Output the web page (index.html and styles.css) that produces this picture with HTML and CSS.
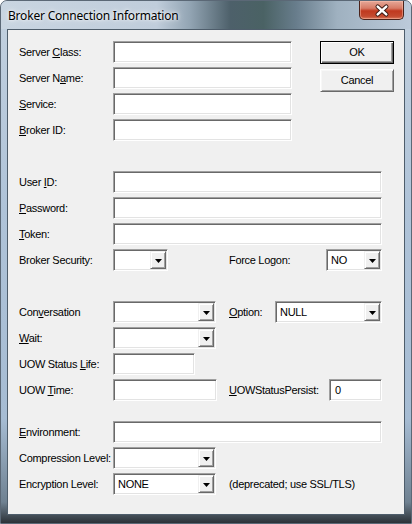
FILE: index.html
```html
<!DOCTYPE html>
<html>
<head>
<meta charset="utf-8">
<link rel="stylesheet" href="styles.css">
</head>
<body>
<div class="window">
  <div class="titlebar">
    <span class="title">Broker Connection Information</span>
    <div class="close">
      <svg width="45" height="19" viewBox="0 0 45 19">
        <path d="M18.5 5.5 L27.5 13.5 M27.5 5.5 L18.5 13.5" stroke="#3b1a14" stroke-width="4.6" stroke-linecap="round" fill="none"/>
        <path d="M18.5 5.5 L27.5 13.5 M27.5 5.5 L18.5 13.5" stroke="#ffffff" stroke-width="2.6" stroke-linecap="round" fill="none"/>
      </svg>
    </div>
  </div>
  <div class="client">
    <div class="top">
      <div class="form form-top">
        <span class="lbl">Server <u>C</u>lass:</span><div class="edit"></div>
        <span class="lbl">Server N<u>a</u>me:</span><div class="edit"></div>
        <span class="lbl"><u>S</u>ervice:</span><div class="edit"></div>
        <span class="lbl"><u>B</u>roker ID:</span><div class="edit"></div>
      </div>
      <div class="buttons">
        <div class="btn default">OK</div>
        <div class="btn">Cancel</div>
      </div>
    </div>

    <div class="form sec sec2">
      <span class="lbl">User <u>I</u>D:</span><div class="edit span2"></div>
      <span class="lbl"><u>P</u>assword:</span><div class="edit span2"></div>
      <span class="lbl"><u>T</u>oken:</span><div class="edit span2"></div>
      <span class="lbl">Broker Security:</span>
      <div class="combo w55"><span class="val"></span><span class="dd"><svg width="7" height="4" viewBox="0 0 7 4"><path d="M0 0 H7 L3.5 4 Z" fill="#000"/></svg></span></div>
      <div class="pair"><span class="lbl">Force Logon:</span>
        <div class="combo w56"><span class="val">NO</span><span class="dd"><svg width="7" height="4" viewBox="0 0 7 4"><path d="M0 0 H7 L3.5 4 Z" fill="#000"/></svg></span></div>
      </div>
    </div>

    <div class="form sec sec3">
      <span class="lbl">Con<u>v</u>ersation</span>
      <div class="combo w103"><span class="val"></span><span class="dd"><svg width="7" height="4" viewBox="0 0 7 4"><path d="M0 0 H7 L3.5 4 Z" fill="#000"/></svg></span></div>
      <div class="pair"><span class="lbl"><u>O</u>ption:</span>
        <div class="combo w107"><span class="val">NULL</span><span class="dd"><svg width="7" height="4" viewBox="0 0 7 4"><path d="M0 0 H7 L3.5 4 Z" fill="#000"/></svg></span></div>
      </div>
      <span class="lbl"><u>W</u>ait:</span>
      <div class="combo w103 span-end"><span class="val"></span><span class="dd"><svg width="7" height="4" viewBox="0 0 7 4"><path d="M0 0 H7 L3.5 4 Z" fill="#000"/></svg></span></div>
      <span class="lbl">UOW Status <u>L</u>ife:</span>
      <div class="edit w82 span-end"></div>
      <span class="lbl">UOW <u>T</u>ime:</span>
      <div class="edit w104"></div>
      <div class="pair"><span class="lbl"><u>U</u>OWStatusPersist:</span>
        <div class="edit w53"><span class="val">0</span></div>
      </div>
    </div>

    <div class="form sec sec4">
      <span class="lbl"><u>E</u>nvironment:</span><div class="edit span2"></div>
      <span class="lbl">Compression Level:</span>
      <div class="combo w103 span-end"><span class="val"></span><span class="dd"><svg width="7" height="4" viewBox="0 0 7 4"><path d="M0 0 H7 L3.5 4 Z" fill="#000"/></svg></span></div>
      <span class="lbl">Encryption Level:</span>
      <div class="combo w103"><span class="val">NONE</span><span class="dd"><svg width="7" height="4" viewBox="0 0 7 4"><path d="M0 0 H7 L3.5 4 Z" fill="#000"/></svg></span></div>
      <span class="lbl note">(deprecated; use SSL/TLS)</span>
    </div>
  </div>
</div>
</body>
</html>
```
FILE: styles.css
```css
html, body {
  margin: 0;
  padding: 0;
  background: #ffffff;
}

.window {
  width: 412px;
  height: 524px;
  box-sizing: border-box;
  display: flex;
  flex-direction: column;
  padding: 0 6px 8px 6px;
  border: 1px solid #5b6876;
  border-radius: 7px 7px 0 0;
  background: linear-gradient(to bottom, #c3d1df 0%, #afc3d8 40%, #a6bcd3 80%, #6f8191 96%, #2b3137 100%);
  font-family: "Liberation Sans", Arial, sans-serif;
  font-size: 11px;
  letter-spacing: -0.3px;
  color: #000;
  overflow: hidden;
}

.titlebar {
  height: 28px;
  margin: 0 -6px;
  padding: 0 6px;
  display: flex;
  align-items: flex-start;
  background: linear-gradient(to right, #c9d5e1 0%, #c0cddb 38%, #93a5b4 46%, #4d606a 56%, #4a6264 64%, #687d8c 72%, #9fb1c0 82%, #bccada 100%);
  border-radius: 6px 6px 0 0;
}

.title {
  font-family: "Noto Sans", "Open Sans", sans-serif;
  font-size: 12px;
  letter-spacing: -0.2px;
  line-height: 16px;
  padding-top: 7px;
  padding-left: 1px;
  color: #000;
  text-shadow: 0 0 6px rgba(255,255,255,0.9), 0 0 3px rgba(255,255,255,0.9);
}

.close {
  margin-left: auto;
  margin-right: 1px;
  width: 45px;
  height: 19px;
  box-sizing: border-box;
  border: 1px solid #4b231b;
  border-top: none;
  border-radius: 0 0 5px 5px;
  background: linear-gradient(to bottom, #e6a898 0%, #d77b66 40%, #c0391f 55%, #c44a2f 85%, #d97a5e 100%);
  box-shadow: inset 0 0 0 1px rgba(255,200,180,0.45);
  display: flex;
}

.close svg {
  display: block;
  margin: 0 auto;
}

.client {
  flex: 1;
  border: 1px solid #4e5d6b;
  background: #f0f0f0;
  padding: 11px 0 0 11px;
}

.top {
  display: flex;
  align-items: flex-start;
}

.form {
  display: grid;
  grid-template-columns: 94px 116px 153px;
  grid-auto-rows: 22px;
  row-gap: 4px;
  align-items: center;
}

.form-top {
  grid-template-columns: 94px 179px;
}

.sec2 { margin-top: 30px; }
.sec3 { margin-top: 30px; }
.sec4 { margin-top: 20px; }

.lbl {
  white-space: nowrap;
  line-height: 13px;
}

.lbl u {
  text-decoration: underline;
  text-underline-offset: 1px;
}

.edit, .combo {
  height: 22px;
  box-sizing: border-box;
  background: #fff;
  border-style: solid;
  border-width: 1px;
  border-color: #a0a0a0 #ffffff #ffffff #a0a0a0;
  box-shadow: inset 1px 1px 0 #696969, inset -1px -1px 0 #e3e3e3;
  display: flex;
  align-items: center;
}

.edit .val {
  padding-left: 5px;
}

.span2 { grid-column: 2 / span 2; }
.span-end { grid-column: 2 / span 2; }

.w55 { width: 55px; }
.w56 { width: 56px; }
.w53 { width: 53px; }
.w82 { width: 82px; }
.w103 { width: 103px; }
.w104 { width: 104px; }
.w107 { width: 107px; }

.combo .val {
  flex: 1;
  padding-left: 4px;
}

.dd {
  width: 16px;
  height: 18px;
  box-sizing: border-box;
  margin-right: 1px;
  background: #f0f0f0;
  border-style: solid;
  border-width: 1px;
  border-color: #f0f0f0 #696969 #696969 #f0f0f0;
  box-shadow: inset 1px 1px 0 #ffffff, inset -1px -1px 0 #a0a0a0;
  display: flex;
  align-items: center;
  justify-content: center;
}

.dd svg {
  display: block;
  margin-top: 1px;
}

.pair {
  display: flex;
  align-items: center;
  justify-content: space-between;
  height: 22px;
}

.note {
  grid-column: 3;
}

.buttons {
  margin-left: 28px;
  display: flex;
  flex-direction: column;
  gap: 5px;
}

.btn {
  width: 74px;
  height: 23px;
  box-sizing: border-box;
  background: #f0f0f0;
  border-style: solid;
  border-width: 1px;
  border-color: #ffffff #696969 #696969 #ffffff;
  box-shadow: inset 1px 1px 0 #f7f7f7, inset -1px -1px 0 #a0a0a0;
  display: flex;
  align-items: center;
  justify-content: center;
  line-height: 13px;
}

.btn.default {
  border: 1px solid #000;
  box-shadow: inset 1px 1px 0 #ffffff, inset -1px -1px 0 #696969, inset -2px -2px 0 #a0a0a0;
}
```
